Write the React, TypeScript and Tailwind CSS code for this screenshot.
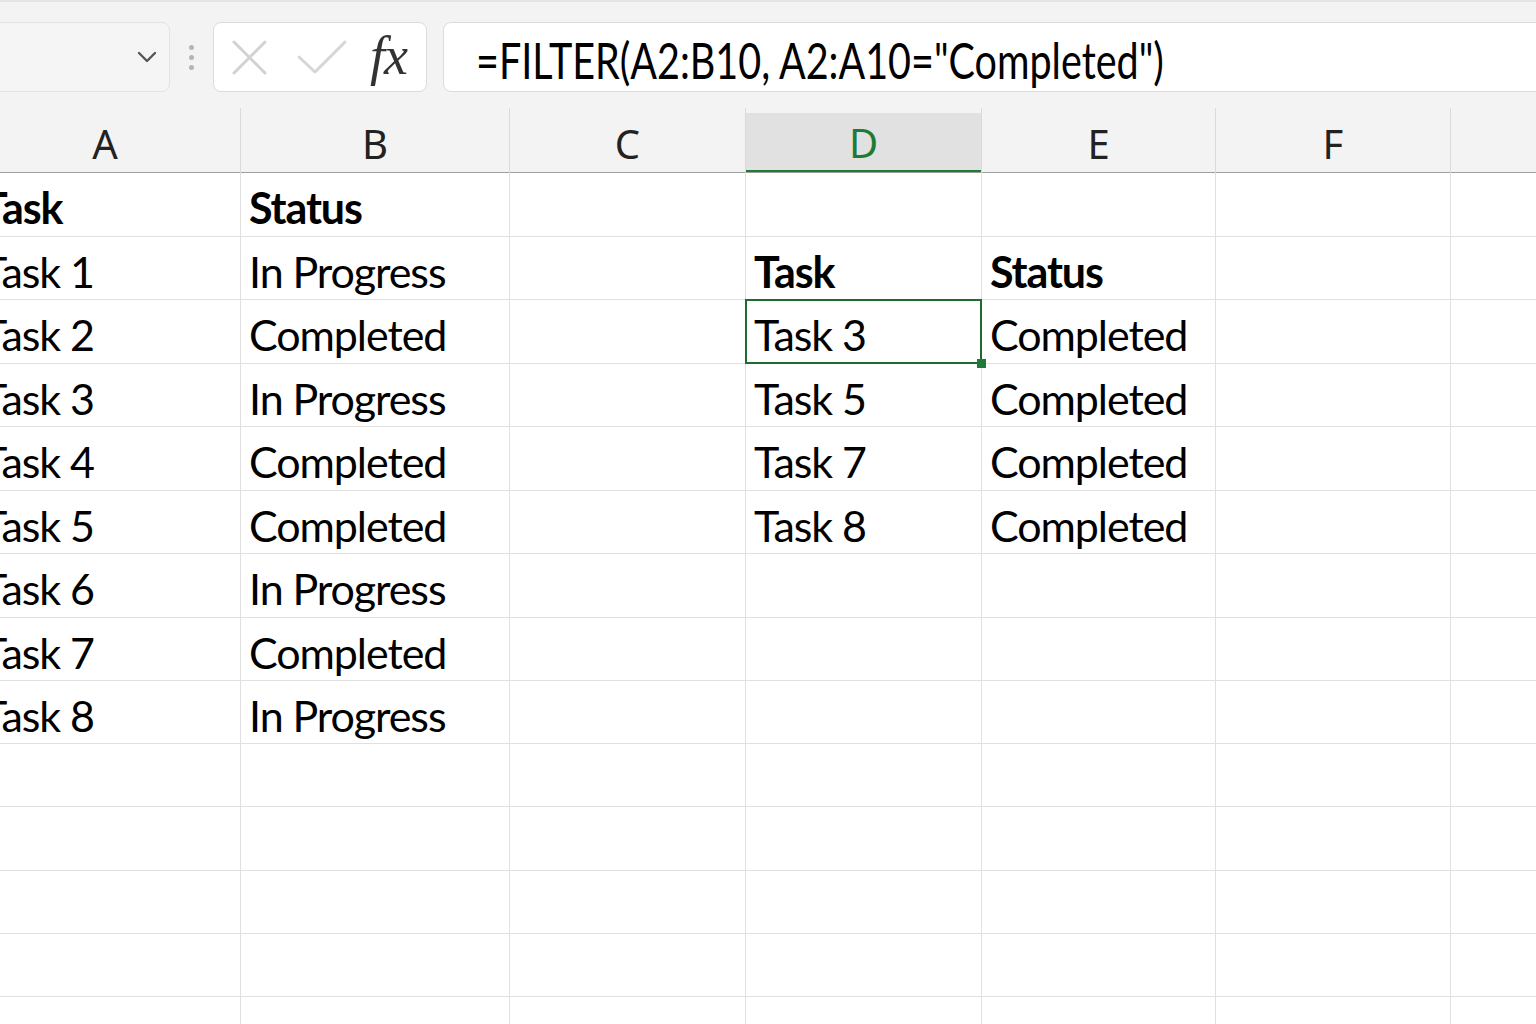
import React from "react";

const colA = ["Task", "Task 1", "Task 2", "Task 3", "Task 4", "Task 5", "Task 6", "Task 7", "Task 8"];
const colB = ["Status", "In Progress", "Completed", "In Progress", "Completed", "Completed", "In Progress", "Completed", "In Progress"];
const colD = ["", "Task", "Task 3", "Task 5", "Task 7", "Task 8"];
const colE = ["", "Status", "Completed", "Completed", "Completed", "Completed"];

// row heights taken so the grid lines land where the sheet draws them
const rowHeights = [64, 63, 64, 63, 64, 63, 64, 63, 63, 63, 64, 63, 63, 40];

const columns = [
  { key: "A", w: "w-[267px]" },
  { key: "B", w: "w-[269px]" },
  { key: "C", w: "w-[236px]" },
  { key: "D", w: "w-[236px]" },
  { key: "E", w: "w-[234px]" },
  { key: "F", w: "w-[235px]" },
  { key: "G", w: "w-[140px]" },
];

const cellText = (col: string, row: number) => {
  if (col === "A") return colA[row] ?? "";
  if (col === "B") return colB[row] ?? "";
  if (col === "D") return colD[row] ?? "";
  if (col === "E") return colE[row] ?? "";
  return "";
};

const isBold = (col: string, row: number) =>
  (row === 0 && (col === "A" || col === "B")) || (row === 1 && (col === "D" || col === "E"));

const Toolbar = () => (
  <div className="h-[108px] bg-[#f3f3f3] border-t-2 border-[#e4e4e4] flex items-start pt-[20px]">
    {/* name box */}
    <div className="-ml-[10px] w-[180px] h-[70px] rounded-lg border border-[#e2e2e2] bg-[#f5f5f5] flex items-center justify-end pr-[11px]">
      <svg width="22" height="14" viewBox="0 0 22 14" fill="none">
        <path d="M3 3l8 8 8-8" stroke="#555" strokeWidth="2.4" strokeLinecap="round" strokeLinejoin="round" />
      </svg>
    </div>
    {/* grip dots */}
    <div className="w-[43px] h-[70px] flex flex-col items-center justify-center gap-[5px]">
      <span className="w-[5px] h-[5px] rounded-full bg-[#b4b4b4]" />
      <span className="w-[5px] h-[5px] rounded-full bg-[#b4b4b4]" />
      <span className="w-[5px] h-[5px] rounded-full bg-[#b4b4b4]" />
    </div>
    {/* cancel / enter / fx */}
    <div className="w-[214px] h-[70px] rounded-lg border border-[#dcdcdc] bg-white flex items-center pl-[18px]">
      <svg width="35" height="35" viewBox="0 0 35 35" fill="none">
        <path d="M2 2l31 31M33 2L2 33" stroke="#d2d2d2" strokeWidth="3" strokeLinecap="round" />
      </svg>
      <svg width="52" height="36" viewBox="0 0 52 36" fill="none" className="ml-[29px]">
        <path d="M3 18l16 15L49 3" stroke="#d6d6d6" strokeWidth="3" strokeLinecap="round" strokeLinejoin="round" />
      </svg>
      <span className="ml-[22px] font-['Liberation_Serif'] italic text-[54px] leading-none text-[#333] -mt-[2px] tracking-[-0.02em]">fx</span>
    </div>
    {/* formula */}
    <div className="ml-[16px] flex-1 -mr-[12px] h-[70px] rounded-lg border border-[#dcdcdc] bg-white flex items-center pl-[32px] pt-[6px] overflow-hidden">
      <span className="font-['Lato'] text-[50px] leading-none text-black whitespace-nowrap origin-left scale-x-[0.79]">
        =FILTER(A2:B10, A2:A10="Completed")
      </span>
    </div>
  </div>
);

const HeaderRow = () => (
  <div className="flex -ml-[26px] bg-[#f3f3f3]">
    {columns.map((c) => (
      <div
        key={c.key}
        className={`${c.w} shrink-0 h-[65px] border-r border-[#dadada] flex flex-col`}
      >
        <div
          className={`flex-1 mt-[5px] flex items-center justify-center pt-[4px] font-['Noto_Sans'] text-[40px] leading-none ${
            c.key === "D" ? "bg-[#e1e1e1] text-[#1e7b34] border-b-2 border-[#1e7b34]" : "text-[#222]"
          } ${c.key === "A" ? "pr-[4px]" : ""}`}
        >
          {c.key === "G" ? "" : c.key}
        </div>
        <div className="h-[1.5px] bg-[#9e9e9e]" />
      </div>
    ))}
  </div>
);

const Grid = () => (
  <div className="-ml-[26px]">
    {rowHeights.map((h, r) => (
      <div key={r} className="flex" style={{ height: h }}>
        {columns.map((c) => {
          const text = cellText(c.key, r);
          const selected = c.key === "D" && r === 2;
          return (
            <div
              key={c.key}
              className={`${c.w} shrink-0 relative border-r border-b border-[#e0e0e0] pl-[8px] pt-[7px] ${
                selected ? "z-10" : ""
              }`}
            >
              <span
                className={`block whitespace-nowrap font-['Lato'] text-[43px] leading-[56px] tracking-[-0.025em] text-black ${
                  isBold(c.key, r) ? "font-bold" : ""
                }`}
              >
                {text}
              </span>
              {selected && (
                <>
                  <div className="absolute -left-[1px] -top-[1px] -right-[1px] -bottom-[1px] border-2 border-[#1e6b30]" />
                  <div className="absolute -right-[5px] -bottom-[5px] w-[9px] h-[9px] bg-[#1f7a3a]" />
                </>
              )}
            </div>
          );
        })}
      </div>
    ))}
  </div>
);

export default function App() {
  return (
    <div className="w-[1536px] h-[1024px] overflow-hidden bg-white">
      <Toolbar />
      <HeaderRow />
      <Grid />
    </div>
  );
}
